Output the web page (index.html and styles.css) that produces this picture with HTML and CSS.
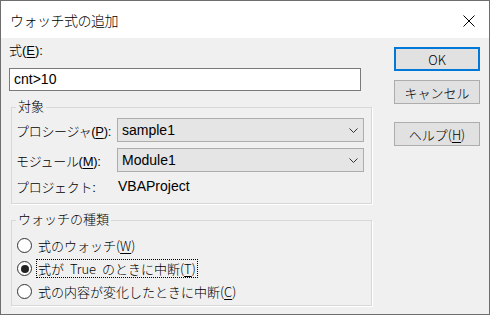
FILE: index.html
```html
<!DOCTYPE html>
<html lang="ja">
<head>
<meta charset="utf-8">
<link rel="stylesheet" href="styles.css">
</head>
<body>
<div class="window">
  <div class="titlebar">
    <span class="title">ウォッチ式の追加</span>
    <svg class="close" width="12" height="12" viewBox="0 0 12 12"><path d="M0.5 0.5 L11.5 11.5 M11.5 0.5 L0.5 11.5" stroke="#000" stroke-width="1" fill="none"/></svg>
  </div>
  <div class="content">
    <div class="left">
      <div class="expr-label">式(<u>E</u>):</div>
      <div class="textbox">cnt&gt;10</div>
      <fieldset class="group group-target">
        <legend>対象</legend>
        <div class="row">
          <span class="lbl">プロシージャ(<u>P</u>):</span>
          <div class="combo"><span>sample1</span><svg class="chev" width="9" height="5" viewBox="0 0 9 5"><path d="M0.5 0.5 L4.5 4.5 L8.5 0.5" stroke="#333" stroke-width="1" fill="none"/></svg></div>
        </div>
        <div class="row">
          <span class="lbl">モジュール(<u>M</u>):</span>
          <div class="combo"><span>Module1</span><svg class="chev" width="9" height="5" viewBox="0 0 9 5"><path d="M0.5 0.5 L4.5 4.5 L8.5 0.5" stroke="#333" stroke-width="1" fill="none"/></svg></div>
        </div>
        <div class="row row-text">
          <span class="lbl">プロジェクト:</span>
          <span class="val">VBAProject</span>
        </div>
      </fieldset>
      <fieldset class="group group-kind">
        <legend>ウォッチの種類</legend>
        <div class="radio-row"><span class="radio"></span><span class="rtext">式のウォッチ(<u>W</u>)</span></div>
        <div class="radio-row"><span class="radio checked"></span><span class="rtext focus">式が<span class="sp"> </span>True<span class="sp"> </span>のときに中断(<u>T</u>)</span></div>
        <div class="radio-row"><span class="radio"></span><span class="rtext">式の内容が変化したときに中断(<u>C</u>)</span></div>
      </fieldset>
    </div>
    <div class="buttons">
      <div class="btn btn-default">OK</div>
      <div class="btn">キャンセル</div>
      <div class="btn btn-help">ヘルプ(<u>H</u>)</div>
    </div>
  </div>
</div>
</body>
</html>
```
FILE: styles.css
```css
* { box-sizing: border-box; }
html, body { margin: 0; padding: 0; }
body {
  width: 490px;
  height: 315px;
  font-family: "Liberation Sans", "Noto Sans CJK JP", sans-serif;
  font-size: 13px;
  font-weight: 300;
  color: #000;
}
u { text-underline-offset: 2px; text-decoration-thickness: 1px; }
.window {
  width: 490px;
  height: 315px;
  border: 1px solid #6e6e6e;
  background: #f0f0f0;
  display: flex;
  flex-direction: column;
}
.titlebar {
  height: 37px;
  background: #fff;
  display: flex;
  align-items: center;
  justify-content: space-between;
  padding: 0 14px 0 9px;
}
.title {
  font-family: "Noto Sans CJK JP", sans-serif;
  font-size: 14px;
  letter-spacing: -0.5px;
  margin-top: 1px;
}
.close { display: block; margin-top: 2px; }
.content {
  display: flex;
  padding: 5px 8px 0 8px;
  gap: 22px;
}
.left { width: 363px; }
.expr-label { line-height: 16px; height: 16px; }
.textbox {
  margin-top: 9px;
  width: 352px;
  height: 23px;
  background: #fff;
  border: 1px solid #7a7a7a;
  padding: 0 4px;
  line-height: 21px;
  font-size: 14px;
}
.group {
  margin: 0 0 0 2px;
  border: 1px solid #d8d8d8;
  box-shadow: 1px 1px 0 #fff;
  min-width: 0;
}
.group legend {
  padding: 0 2px;
  line-height: 16px;
  height: 16px;
}
.group-target {
  margin-top: 8px;
  padding: 3px 7px 6px 4px;
  height: 105px;
}
.row {
  display: flex;
  align-items: center;
  height: 24px;
}
.row + .row { margin-top: 6px; }
.row-text { height: 20px; margin-top: 4px !important; }
.lbl { width: 101px; flex: none; white-space: nowrap; letter-spacing: -0.3px; }
.val { padding-left: 1px; font-size: 14px; }
.combo {
  width: 247px;
  height: 24px;
  background: #e5e5e5;
  border: 1px solid #adadad;
  display: flex;
  align-items: center;
  justify-content: space-between;
  padding: 0 5px 0 4px;
  font-size: 14px;
}
.chev { display: block; }
.group-kind {
  margin-top: 8px;
  padding: 6px 7px 0 4px;
  height: 94px;
}
.radio-row {
  display: flex;
  align-items: center;
  height: 23px;
}
.radio {
  width: 15px;
  height: 15px;
  border-radius: 50%;
  border: 1px solid #333;
  background: #fff;
  margin-left: 1px;
  margin-right: 5px;
  flex: none;
  display: flex;
  align-items: center;
  justify-content: center;
}
.radio.checked::after {
  content: "";
  width: 8px;
  height: 8px;
  border-radius: 50%;
  background: #222;
}
.rtext {
  font-family: "Noto Sans CJK JP", sans-serif;
  padding: 0 1px;
  line-height: 17px;
  white-space: nowrap;
}
.rtext .sp { letter-spacing: 3px; }
.rtext.focus { outline: 1px dotted #000; outline-offset: 0; }
.buttons {
  display: flex;
  flex-direction: column;
  width: 86px;
  padding-top: 4px;
}
.btn {
  height: 24px;
  background: #e1e1e1;
  border: 1px solid #adadad;
  display: flex;
  align-items: center;
  justify-content: center;
  font-family: "Noto Sans CJK JP", sans-serif;
  font-size: 13px;
}
.btn + .btn { margin-top: 9px; }
.btn-default { border: 2px solid #0078d7; }
.btn.btn-help { margin-top: 18px; }
```
